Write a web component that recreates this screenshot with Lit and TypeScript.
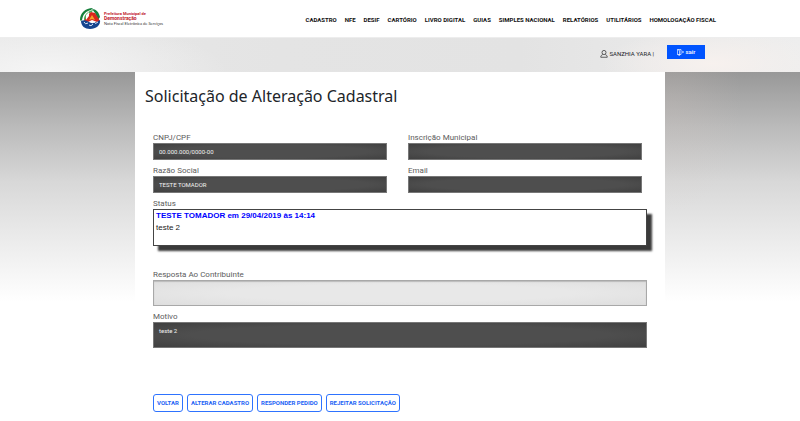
import { LitElement, html, css, svg } from "lit";
import { customElement } from "lit/decorators.js";

const MENU = [
  "CADASTRO",
  "NFE",
  "DESIF",
  "CARTÓRIO",
  "LIVRO DIGITAL",
  "GUIAS",
  "SIMPLES NACIONAL",
  "RELATÓRIOS",
  "UTILITÁRIOS",
  "HOMOLOGAÇÃO FISCAL",
];

const FIELDS = [
  { id: "cnpj", label: "CNPJ/CPF", value: "00.000.000/0000-00" },
  { id: "inscricao", label: "Inscrição Municipal", value: "" },
  { id: "razao", label: "Razão Social", value: "TESTE TOMADOR" },
  { id: "email", label: "Email", value: "" },
];

const ACTIONS = ["VOLTAR", "ALTERAR CADASTRO", "RESPONDER PEDIDO", "REJEITAR SOLICITAÇÃO"];

const emblem = svg`
  <path d="M0 12C0 5 5 0 13 0L11 2C6 3 3 6 2 12L1 13Z" fill="#16803c"/>
  <path d="M4 10C5 6 8 3 13 2L12 4C9 5 7 8 6 12L4 13Z" fill="#4fae5b"/>
  <path d="M12 1C16 1 19 4 20 9L18 12L15 5Z" fill="#16803c"/>
  <path d="M4 13L8 7L11 4L15 5L20 13L17 14L12 12L8 14Z" fill="#d9261c"/>
  <path d="M9 12L12 7L15 12L12 11Z" fill="#f4a32b"/>
  <path d="M6 7L9 4L9 8L6 12Z" fill="#fff"/>
  <path d="M1 13Q5 11 9 14T20 12C21 17 16 21 10 21C5 21 1 18 1 13Z" fill="#16458f"/>
  <path d="M4 14Q5 17 8 15M9 17Q11 19 13 16M14 14Q15 17 18 14" fill="none" stroke="#d5e3f5" stroke-width="1"/>`;

@customElement("app-root")
export class AppRoot extends LitElement {
  static styles = css`
    :host {
      display: block;
      min-height: 100vh;
      background: #fff;
      color: #212529;
      font-family: Roboto, "Open Sans", sans-serif;
    }
    * {
      box-sizing: border-box;
    }
    .header {
      display: flex;
      align-items: center;
      justify-content: space-between;
      height: 37px;
      padding: 0 84px 0 80px;
    }
    .brand {
      display: flex;
      align-items: center;
      gap: 3px;
      color: #333;
      text-decoration: none;
      font-size: 4px;
      line-height: 5px;
    }
    .brand svg {
      width: 21px;
      height: 21px;
    }
    .brand span {
      display: block;
      white-space: nowrap;
    }
    .brand .city {
      color: #c0202c;
      font-weight: bold;
    }
    .brand .name {
      font-size: 5px;
    }
    .brand .service {
      font-family: Lato, sans-serif;
    }
    .menu {
      display: flex;
      gap: 8px;
      padding-top: 2px;
    }
    .menu a {
      color: #111;
      font-size: 6px;
      font-weight: bold;
      line-height: 10px;
      text-decoration: none;
      white-space: nowrap;
    }
    .userbar {
      display: flex;
      align-items: flex-start;
      justify-content: flex-end;
      gap: 13px;
      height: 35px;
      padding: 7px 95px 0 0;
      border-top: 1px solid #ededed;
      background:
        radial-gradient(ellipse 110px 34px at 89% 75%, #f7f1ee, transparent),
        radial-gradient(ellipse 180px 50px at 6% 100%, #f5f5f5, transparent),
        linear-gradient(90deg, #e8e8e8, #e4e4e4 35%, #e3e3e3 65%, #eee);
    }
    .user {
      display: flex;
      align-items: center;
      gap: 1px;
      height: 18px;
      font-size: 6px;
      line-height: 10px;
      white-space: nowrap;
    }
    .user svg {
      width: 8px;
      height: 8px;
    }
    .logout {
      display: flex;
      align-items: center;
      justify-content: center;
      gap: 2px;
      width: 38px;
      height: 14px;
      padding: 0;
      border: 0;
      background: #0054ff;
      color: #fff;
      font: 500 6px/10px Roboto, sans-serif;
    }
    .logout svg {
      width: 7px;
      height: 7px;
    }
    .stage {
      background:
        radial-gradient(ellipse 70px 110px at 84% 30px, #d8c8c02e, transparent),
        linear-gradient(#989898, #bababa 54px, #d8d8d8 110px, #ececec 170px, #fff 230px);
    }
    .card {
      width: 66.25%;
      margin: 0 auto;
      padding: 12px 18px 9px;
      background: #fff;
    }
    h1 {
      margin: 0 -8px 24px;
      font: 16px/24px "Noto Sans", sans-serif;
    }
    .fields {
      display: grid;
      grid-template-columns: 1fr 1fr;
      gap: 5px 21px;
      padding-right: 5px;
    }
    .field {
      display: flex;
      flex-direction: column;
      min-width: 0;
    }
    .block {
      margin-top: 5px;
    }
    .reply {
      margin-top: 23px;
    }
    label,
    .label {
      color: #5c5c5c;
      font-size: 8px;
      line-height: 11px;
    }
    input,
    textarea {
      display: block;
      width: 100%;
      margin: 0;
      border: 1px solid #777;
      border-radius: 0;
      outline: 0;
      padding: 0 5px;
      background: radial-gradient(ellipse at center, #4e4e4e 60%, #404040);
      color: #f2f2f2;
      font: 6px/10px Roboto, sans-serif;
      resize: none;
    }
    input {
      height: 17px;
    }
    textarea {
      height: 26px;
      padding-top: 3px;
      overflow: hidden;
    }
    .reply textarea {
      border-color: #a8a8a8;
      background: radial-gradient(ellipse at center, #e8e8e8 50%, #dedede);
      box-shadow: inset 0 1px 1px #bbb;
      color: #333;
    }
    .status {
      height: 37px;
      padding: 0 2px;
      border: 1px solid #444;
      box-shadow: 5px 5px 2px #3a3a3a;
      background: #fff;
      color: #222;
      font: 8px/12px "Liberation Sans", sans-serif;
    }
    .status p {
      margin: 0;
    }
    .status .author {
      color: #00f;
      font-weight: bold;
    }
    .actions {
      display: flex;
      gap: 4px;
      margin-top: 46px;
    }
    .actions button {
      height: 18px;
      padding: 0 3px;
      border: 1px solid #2e73ff;
      border-radius: 3px;
      background: #fff;
      color: #1d63f5;
      font: bold 6px/10px Roboto, sans-serif;
      white-space: nowrap;
    }
  `;

  render() {
    return html`
      <header class="header">
        <a class="brand" href="#">
          <svg viewBox="0 0 21 21" aria-hidden="true">${emblem}</svg>
          <span>
            <span class="city">Prefeitura Municipal de</span>
            <span class="city name">Demonstração</span>
            <span class="service">Nota Fiscal Eletrônica de Serviços</span>
          </span>
        </a>
        <nav class="menu">${MENU.map((item) => html`<a href="#">${item}</a>`)}</nav>
      </header>
      <div class="userbar">
        <span class="user">
          <svg viewBox="0 0 16 16" fill="none" stroke="#333" stroke-width="1.5" aria-hidden="true">
            <ellipse cx="8" cy="5" rx="4" ry="4.2" />
            <path d="M5.5 9C3 10.5 1.5 11 1.5 14.5H14.5C14.5 11 13 10.5 10.5 9" />
          </svg>
          SANZHIA YARA |
        </span>
        <button class="logout" type="button">
          <svg viewBox="0 0 14 14" fill="none" stroke="#fff" stroke-width="1.3" aria-hidden="true">
            <path d="M8 4V1H1V11H8V8M1 1L5 3V13L1 11M6 6H13M10.5 3.5L13 6L10.5 8.5" />
          </svg>
          sair
        </button>
      </div>
      <div class="stage">
        <main class="card">
          <h1>Solicitação de Alteração Cadastral</h1>
          <form>
            <div class="fields">
              ${FIELDS.map(
                (f) => html`<div class="field">
                  <label for=${f.id}>${f.label}</label>
                  <input id=${f.id} type="text" readonly .value=${f.value} />
                </div>`
              )}
            </div>
            <div class="field block">
              <span class="label">Status</span>
              <div class="status">
                <p class="author">TESTE TOMADOR em 29/04/2019 às 14:14</p>
                <p>teste 2</p>
              </div>
            </div>
            <div class="field reply">
              <label for="resposta">Resposta Ao Contribuinte</label>
              <textarea id="resposta"></textarea>
            </div>
            <div class="field block">
              <label for="motivo">Motivo</label>
              <textarea id="motivo" readonly .value=${"teste 2"}></textarea>
            </div>
            <div class="actions">
              ${ACTIONS.map((a) => html`<button type="button">${a}</button>`)}
            </div>
          </form>
        </main>
      </div>
    `;
  }
}
